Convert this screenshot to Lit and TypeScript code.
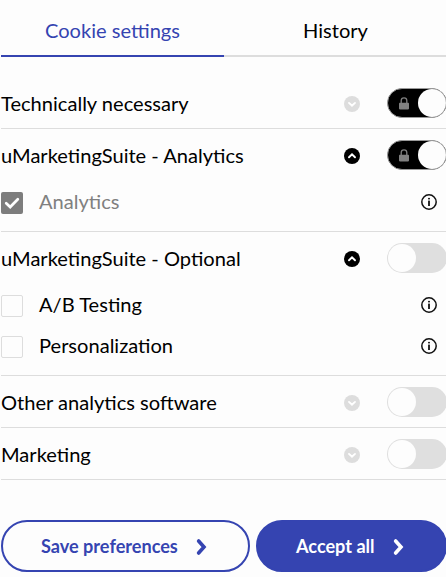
import { LitElement, html, svg, css, nothing } from "lit";
import { customElement, property } from "lit/decorators.js";
import { classMap } from "lit/directives/class-map.js";

interface Option {
  label: string;
  locked?: boolean;
}
interface Group {
  label: string;
  locked?: boolean;
  options?: Option[];
}

const groups: Group[] = [
  { label: "Technically necessary", locked: true },
  { label: "uMarketingSuite - Analytics", locked: true, options: [{ label: "Analytics", locked: true }] },
  { label: "uMarketingSuite - Optional", options: [{ label: "A/B Testing" }, { label: "Personalization" }] },
  { label: "Other analytics software" },
  { label: "Marketing" },
];

const arrow = html`<svg class="arrow" width="12" height="18" viewBox="0 0 12 18">
  <path d="M2.6 3 L8 9 L2.6 15" fill="none" stroke="currentColor" stroke-width="3.6" stroke-linecap="round" stroke-linejoin="miter" />
</svg>`;

const info = html`<svg class="info" width="16" height="16" viewBox="0 0 16 16">
  <circle cx="8" cy="8" r="7.2" fill="none" stroke="#111" stroke-width="1.5" />
  <rect x="7.1" y="3.9" width="1.8" height="1.5" fill="#111" />
  <rect x="7.1" y="6.6" width="1.8" height="5.4" fill="#111" />
</svg>`;

@customElement("consent-group")
export class ConsentGroup extends LitElement {
  @property({ attribute: false }) group!: Group;

  static styles = css`
    :host { display: block; border-bottom: 1px solid #ddd; }
    .head { display: flex; height: 51px; padding-top: 11px; box-sizing: border-box; }
    .title { flex: 1; line-height: 24px; padding-top: 3px; white-space: nowrap; }
    .expand { flex: none; margin: 8px 27px 0 0; color: #ddd; }
    .expand.open { color: #000; }
    .toggle {
      flex: none; width: 60px; height: 30px; box-sizing: border-box; border-radius: 15px;
      background: #dfdfdf; padding: 1px; display: flex; align-items: center;
    }
    .knob { width: 28px; height: 28px; border-radius: 50%; background: #fdfdfd; }
    .toggle.on {
      background: #000; border: 1px solid #999; padding: 0 0 0 11px; justify-content: space-between;
    }
    .options { padding-bottom: 10px; }
    .option { display: flex; height: 41px; padding-top: 12px; box-sizing: border-box; }
    .box {
      width: 22px; height: 22px; box-sizing: border-box; border: 1px solid #ddd;
      border-radius: 2px; margin-right: 16px; flex: none;
    }
    .option.locked .box { border: 0; background: #7d7d7d; }
    .option.locked .name { color: #808080; }
    .box svg { display: block; }
    .name { flex: 1; line-height: 24px; margin-top: -3px; }
    .info { margin: 2px 10px 0 0; }
  `;

  render() {
    const { label, locked, options } = this.group;
    return html`
      <div class="head">
        <div class="title">${label}</div>
        <svg class=${classMap({ expand: true, open: !!options })} width="16" height="16" viewBox="0 0 16 16">
          <circle cx="8" cy="8" r="8" fill="currentColor" />
          ${svg`<path d=${options ? "M5 9.3 L8 6.4 L11 9.3" : "M5 6.9 L8 9.8 L11 6.9"}
            fill="none" stroke="#fff" stroke-width="1.9" stroke-linecap="round" />`}
        </svg>
        <div class=${classMap({ toggle: true, on: !!locked })}>
          ${locked
            ? html`<svg width="10" height="13" viewBox="0 0 10 13">
                <path d="M2.2 6 V3.6 A2.8 2.8 0 0 1 7.8 3.6 V6" fill="none" stroke="#808080" stroke-width="1.3" />
                <rect x="0" y="5.8" width="10" height="6.6" rx="0.8" fill="#808080" />
              </svg>`
            : nothing}
          <span class="knob"></span>
        </div>
      </div>
      ${options
        ? html`<div class="options">
            ${options.map(
              (o) => html`<div class=${classMap({ option: true, locked: !!o.locked })}>
                <span class="box">${o.locked
                  ? html`<svg width="22" height="22" viewBox="0 0 22 22">
                      <path d="M5.2 11.2 L9.2 15 L16.8 7.2" fill="none" stroke="#fff" stroke-width="2.7" stroke-linecap="round" />
                    </svg>`
                  : nothing}</span>
                <span class="name">${o.label}</span>
                ${info}
              </div>`
            )}
          </div>`
        : nothing}
    `;
  }
}

@customElement("app-root")
export class AppRoot extends LitElement {
  static styles = css`
    :host {
      display: block; height: 577px; overflow: hidden; box-sizing: border-box; padding-left: 1px;
      background: #fdfdfd; color: #000; font: 20.08px/24px Lato, sans-serif;
    }
    .panel { width: 446px; }
    .tabs { display: flex; margin-bottom: 20px; }
    .tab { flex: 1; height: 57px; box-sizing: border-box; padding-top: 18px; text-align: center; border-bottom: 2px solid #ddd; }
    .tab.active { color: #3544b1; border-color: #3544b1; }
    .actions { display: flex; gap: 6px; margin-top: 40px; }
    .button {
      height: 52px; box-sizing: border-box; border: 2px solid #3544b1; border-radius: 26px;
      display: flex; align-items: center; padding-left: 38px; font-weight: 700; font-size: 18.1px;
      color: #3544b1; white-space: nowrap;
    }
    .save { width: 249px; }
    .accept { width: 191px; background: #3544b1; color: #fff; }
    .arrow { margin-left: 18px; margin-top: 2px; }
  `;

  render() {
    return html`
      <div class="panel">
        <div class="tabs">
          <div class="tab active">Cookie settings</div>
          <div class="tab">History</div>
        </div>
        ${groups.map((g) => html`<consent-group .group=${g}></consent-group>`)}
        <div class="actions">
          <div class="button save"><span>Save preferences</span>${arrow}</div>
          <div class="button accept"><span>Accept all</span>${arrow}</div>
        </div>
      </div>
    `;
  }
}
